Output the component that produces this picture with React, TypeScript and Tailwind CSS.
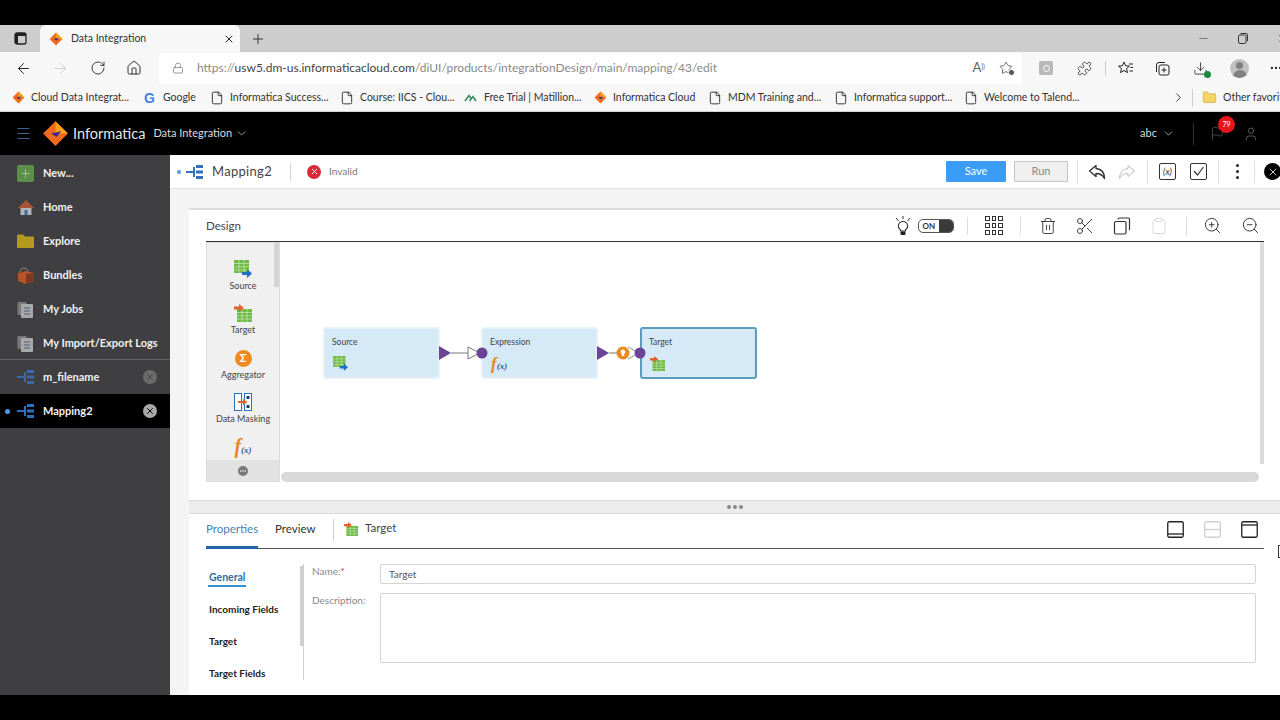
import {
  ArrowLeft,
  ArrowRight,
  ChevronDown,
  ChevronRight,
  Flag,
  Home,
  Lock,
  Menu,
  MoreHorizontal,
  Plus,
  RotateCw,
  Scissors,
  Trash2,
  User,
  X,
  ZoomIn,
  ZoomOut,
  Clipboard,
  Minus,
  Puzzle,
  Star,
  Download,
  File,
  Folder,
} from 'lucide-react';

const InfaLogo = ({ size = 14 }: { size?: number }) => (
  <svg width={size} height={size} viewBox="0 0 24 24" className="shrink-0">
    <path d="M12 1 L23 12 L12 23 L1 12 Z" fill="#f26b1d" />
    <path d="M12 1 L23 12 L12 12 Z" fill="#f9a01b" />
    <path d="M8 12 L17 10 L13 15 Z" fill="#3a2a8c" />
  </svg>
);

const MappingIcon = ({ color = '#2f6fc0', dash = '#2f6fc0' }: { color?: string; dash?: string }) => (
  <svg width="18" height="14" viewBox="0 0 18 14" className="shrink-0">
    <rect x="0" y="6" width="7" height="2" fill={dash} />
    <rect x="7" y="2" width="2" height="10" fill={color} />
    <rect x="10" y="0" width="7" height="3" fill={color} />
    <rect x="10" y="5.5" width="7" height="3" fill={color} />
    <rect x="10" y="11" width="7" height="3" fill={color} />
  </svg>
);

const SourceIcon = ({ size = 18 }: { size?: number }) => (
  <svg width={size} height={size} viewBox="0 0 18 18" className="shrink-0">
    <rect x="0" y="0" width="15" height="13" fill="#6dbb45" />
    <path d="M0 3.5H15M0 6.800H15M0 10H15M5 0V13M10 0V13" stroke="#d8efc8" strokeWidth="0.6" />
    <path d="M8 12H13V9L18 13.500L13 18V15H8Z" fill="#1f6fc4" />
  </svg>
);

const TargetIcon = ({ size = 18 }: { size?: number }) => (
  <svg width={size} height={size} viewBox="0 0 18 18" className="shrink-0">
    <rect x="3" y="5" width="15" height="13" fill="#6dbb45" />
    <path d="M3 8.500H18M3 11.800H18M3 15H18M8 5V18M13 5V18" stroke="#d8efc8" strokeWidth="0.6" />
    <path d="M0 2.500H5V0L10 4L5 8V5.500H0Z" fill="#e2622a" />
  </svg>
);

const FxIcon = ({ size = 'text-[18px]' }: { size?: string }) => (
  <span className={`font-['Liberation_Serif',serif] italic font-bold text-[#e8861f] leading-none ${size}`}>
    f<span className="text-[9px] text-[#3c5a8c]">(x)</span>
  </span>
);

const Bookmark = ({ width, icon, label }: { width: string; icon: React.ReactNode; label: string }) => (
  <div className={`flex items-center gap-[6px] shrink-0 ${width}`}>
    {icon}
    <span className="text-[10.500px] text-[#333] whitespace-nowrap">{label}</span>
  </div>
);

const PageIcon = () => <File size={14} strokeWidth={1.5} className="text-[#222] shrink-0" />;

const ChromeBars = () => (
  <>
    <div className="h-[25px] bg-black shrink-0" />
    {/* tab strip */}
    <div className="h-[27px] bg-[#cdcdcd] flex items-end shrink-0">
      <div className="w-[40px] h-full flex items-center justify-center">
        <svg width="13" height="13" viewBox="0 0 13 13">
          <rect x="1" y="1" width="11" height="11" rx="2" fill="none" stroke="#222" strokeWidth="1.3" />
          <rect x="1" y="1" width="11" height="3" fill="#222" />
          <rect x="1" y="1" width="3" height="11" fill="#222" />
        </svg>
      </div>
      <div className="w-[200px] h-[27px] bg-[#f7f7f7] rounded-t-[6px] flex items-center pl-[9px] pr-[5px]">
        <InfaLogo size={14} />
        <span className="ml-[8px] text-[10.500px] text-[#333] flex-1">Data Integration</span>
        <X size={12} className="text-[#222]" />
      </div>
      <div className="w-[36px] h-full flex items-center justify-center">
        <Plus size={16} strokeWidth={1.3} className="text-[#222]" />
      </div>
      <div className="flex-1" />
      <div className="h-full flex items-center -mr-[9px]">
        <Minus size={13} strokeWidth={1} className="text-[#333]" />
        <svg width="10" height="11" viewBox="0 0 10 11" className="ml-[28px]">
          <rect x=".5" y="2" width="7.500" height="8.500" rx="1.500" fill="none" stroke="#333" strokeWidth="1" />
          <path d="M2.500 .5H8A1.500 1.500 0 0 1 9.500 2V8" fill="none" stroke="#333" strokeWidth="1" />
        </svg>
        <X size={13} strokeWidth={1} className="ml-[28px] text-[#333]" />
      </div>
    </div>
    {/* address bar */}
    <div className="h-[32px] bg-[#f7f7f7] flex items-center shrink-0">
      <div className="w-[160px] flex items-center pl-[15px] gap-[20px]">
        <ArrowLeft size={17} strokeWidth={1.4} className="text-[#222]" />
        <ArrowRight size={17} strokeWidth={1.2} className="text-[#c8c8c8]" />
        <RotateCw size={16} strokeWidth={1.3} className="ml-[1px] text-[#222]" />
        <Home size={16} strokeWidth={1.4} className="text-[#222]" />
      </div>
      <div className="w-[863px] h-[31px] bg-white rounded-[3px] flex items-center pl-[13px] pr-[9px] -ml-[1px]">
        <Lock size={12} strokeWidth={1.3} className="text-[#666]" />
        <span className="ml-[13px] text-[12px] text-[#8a8a8a] flex-1 whitespace-nowrap">
          https://<span className="text-[#444]">usw5.dm-us.informaticacloud.com</span>/diUI/products/integrationDesign/main/mapping/43/edit
        </span>
        <span className="text-[13px] text-[#666] mr-[14px]">
          A<sup className="text-[7px]">))</sup>
        </span>
        <div className="relative">
          <Star size={14} strokeWidth={1.3} className="text-[#444]" />
          <span className="absolute -right-[2px] -bottom-[1px] w-[7px] h-[7px] rounded-full bg-[#555] border border-white" />
        </div>
      </div>
      <div className="flex items-center flex-1 overflow-hidden">
        <div className="ml-[17px] w-[14px] h-[14px] bg-[#b9b9b9] rounded-[2px] flex items-center justify-center shrink-0">
          <div className="w-[7px] h-[7px] rounded-full border border-white" />
        </div>
        <Puzzle size={15} strokeWidth={1.3} className="ml-[24px] text-[#222] shrink-0" />
        <div className="ml-[13px] w-px h-[15px] bg-[#ccc] shrink-0" />
        <svg width="16" height="15" viewBox="0 0 16 15" className="ml-[12px] shrink-0">
          <path
            d="M6 1L7.600 4.800L11.500 5.100L8.500 7.700L9.500 11.600L6 9.500L2.500 11.600L3.500 7.700L.5 5.100L4.400 4.800Z"
            fill="none"
            stroke="#222"
            strokeWidth="1"
          />
          <path d="M11 3H15M12.500 6.500H15M11.500 10H15" stroke="#222" strokeWidth="1" />
        </svg>
        <svg width="15" height="15" viewBox="0 0 15 15" className="ml-[21px] shrink-0">
          <path d="M1.500 11V4A2.500 2.500 0 0 1 4 1.500H10" fill="none" stroke="#222" strokeWidth="1" />
          <rect x="4" y="4" width="10" height="10" rx="2" fill="none" stroke="#222" strokeWidth="1" />
          <path d="M9 6.500V11.500M6.500 9H11.500" stroke="#222" strokeWidth="1" />
        </svg>
        <div className="relative ml-[23px] shrink-0">
          <Download size={15} strokeWidth={1.3} className="text-[#222]" />
          <span className="absolute -right-[3px] -bottom-[2px] w-[7px] h-[7px] rounded-full bg-[#1c8a3c]" />
        </div>
        <div className="w-[19px] h-[19px] rounded-full bg-[#c0c0c0] overflow-hidden flex flex-col items-center shrink-0 ml-[22px] pt-[3px]">
          <span className="w-[7px] h-[7px] rounded-full bg-[#808080]" />
          <span className="w-[14px] h-[8px] rounded-t-full bg-[#808080] mt-[1px]" />
        </div>
        <MoreHorizontal size={14} className="text-[#222] shrink-0 ml-[20px]" />
      </div>
    </div>
    {/* bookmarks */}
    <div className="h-[28px] bg-[#f7f7f7] border-b border-[#d4d4d4] flex items-center pl-[12px] shrink-0 overflow-hidden">
      <Bookmark width="w-[132px]" icon={<InfaLogo size={13} />} label="Cloud Data Integrat..." />
      <Bookmark
        width="w-[66px]"
        icon={
          <span className="font-['Liberation_Sans',sans-serif] font-bold text-[14px] leading-none text-[#3f7fe8] mr-[2px]">
            G
          </span>
        }
        label="Google"
      />
      <Bookmark width="w-[130px]" icon={<PageIcon />} label="Informatica Success..." />
      <Bookmark width="w-[124px]" icon={<PageIcon />} label="Course: IICS - Clou..." />
      <Bookmark
        width="w-[130px]"
        icon={
          <svg width="13" height="8" viewBox="0 0 13 8" className="shrink-0 mr-[1px]">
            <path d="M1 7L5 1.500L7.500 5M5.500 7L9 2.500L12 7" fill="none" stroke="#2e8b57" strokeWidth="1.500" />
          </svg>
        }
        label="Free Trial | Matillion..."
      />
      <Bookmark width="w-[114px]" icon={<InfaLogo size={13} />} label="Informatica Cloud" />
      <Bookmark width="w-[126px]" icon={<PageIcon />} label="MDM Training and..." />
      <Bookmark width="w-[130px]" icon={<PageIcon />} label="Informatica support..." />
      <Bookmark width="w-[207px]" icon={<PageIcon />} label="Welcome to Talend..." />
      <ChevronRight size={15} strokeWidth={1.4} className="text-[#222] shrink-0" />
      <div className="h-[18px] w-px bg-[#ccc] ml-[6px] shrink-0" />
      <div className="flex items-center gap-[6px] shrink-0 ml-[9px]">
        <Folder size={15} fill="#f6d365" strokeWidth={1} className="text-[#c9a227]" />
        <span className="text-[10.500px] text-[#333] whitespace-nowrap">Other favorites</span>
      </div>
    </div>
  </>
);

const AppHeader = () => (
  <div className="h-[43px] bg-black flex items-center shrink-0">
    <Menu size={17} strokeWidth={1.3} className="ml-[15px] text-[#3f6f9f]" />
    <div className="ml-[10px]">
      <InfaLogo size={27} />
    </div>
    <span className="ml-[4px] text-[14.500px] text-[#e6e6e6]">Informatica</span>
    <span className="ml-[8px] text-[11px] text-[#dcdcdc]">Data Integration</span>
    <ChevronDown size={13} strokeWidth={1.3} className="ml-[3px] text-[#dcdcdc]" />
    <div className="flex-1" />
    <span className="text-[11px] text-[#dcdcdc]">abc</span>
    <ChevronDown size={13} strokeWidth={1.3} className="ml-[5px] text-[#dcdcdc]" />
    <div className="w-px h-[22px] bg-[#333] ml-[18px]" />
    <div className="relative ml-[16px]">
      <Flag size={15} strokeWidth={1.2} className="text-[#555]" />
      <span className="absolute -top-[10px] left-[8px] w-[17px] h-[17px] rounded-full bg-[#e8141c] text-white text-[7px] flex items-center justify-center">
        79
      </span>
    </div>
    <User size={16} strokeWidth={1.1} className="ml-[18px] mr-[21px] text-[#777]" />
  </div>
);

const SideRow = ({
  icon,
  label,
  active,
  dot,
  close,
  low,
}: {
  icon: React.ReactNode;
  label: string;
  active?: boolean;
  dot?: boolean;
  close?: string;
  low?: boolean;
}) => (
  <div className={`relative h-[34px] flex items-center pl-[17px] ${active ? 'bg-black' : ''} ${low ? 'pt-[2px]' : ''}`}>
    {dot && <span className="absolute left-[5px] w-[5px] h-[5px] rounded-full bg-[#4a9be8]" />}
    <div className="w-[17px] flex justify-center shrink-0">{icon}</div>
    <span className="ml-[9px] text-[11px] font-bold text-[#f1f1f1] whitespace-nowrap flex-1">{label}</span>
    {close && (
      <span className={`w-[14px] h-[14px] mr-[13px] rounded-full flex items-center justify-center ${close}`}>
        <X size={10} strokeWidth={2.2} className={active ? 'text-black' : 'text-[#444]'} />
      </span>
    )}
  </div>
);

const DocsIcon = () => (
  <svg width="17" height="17" viewBox="0 0 17 17">
    <rect x="0.5" y="1" width="9" height="13" rx="1" fill="#7a7a7a" />
    <rect x="4" y="3" width="12" height="14" rx="1" fill="#a8a8a8" />
    <path d="M7 7H13M7 10H13M7 13H13" stroke="#4d5f78" strokeWidth="1.2" />
  </svg>
);

const Sidebar = () => (
  <div className="w-[170px] bg-[#3f3f41] shrink-0 flex flex-col">
    <SideRow
      low
      icon={
        <span className="w-[17px] h-[17px] rounded-[2px] bg-[#5d8f4a] flex items-center justify-center">
          <Plus size={13} strokeWidth={1.3} className="text-[#b8d6ab]" />
        </span>
      }
      label="New..."
    />
    <SideRow
      low
      icon={
        <svg width="16" height="15" viewBox="0 0 16 15">
          <path d="M2.5 7V15H13.5V7Z" fill="#b3b3b3" />
          <path d="M0 8L8 0L16 8Z" fill="#a9543a" />
          <rect x="6.5" y="10" width="3" height="5" fill="#3b6aa8" />
        </svg>
      }
      label="Home"
    />
    <SideRow
      low
      icon={
        <svg width="17" height="14" viewBox="0 0 17 14">
          <path d="M0 2C0 1 .5.5 1.5.5H6L8 2.5H15.5C16.5 2.500 17 3 17 4V13C17 13.500 16.500 14 16 14H1C.5 14 0 13.500 0 13Z" fill="#b59a22" />
        </svg>
      }
      label="Explore"
    />
    <SideRow
      low
      icon={
        <svg width="17" height="17" viewBox="0 0 17 17">
          <path d="M3 5C3 0 10 0 11 4" fill="none" stroke="#8a8a8a" strokeWidth="1" />
          <path d="M1 6L9 4L17 6V14L9 17L1 14Z" fill="#b5552a" />
          <path d="M9 7L17 6V14L9 17Z" fill="#7c3b20" />
        </svg>
      }
      label="Bundles"
    />
    <SideRow low icon={<DocsIcon />} label="My Jobs" />
    <SideRow low icon={<DocsIcon />} label="My Import/Export Logs" />
    <div className="h-px bg-[#66666a]" />
    <SideRow icon={<MappingIcon color="#3a6aa8" dash="#3a6aa8" />} label="m_filename" close="bg-[#6b6b6b]" />
    <SideRow icon={<MappingIcon />} label="Mapping2" active dot close="bg-[#a8a8a8]" />
  </div>
);

const ReplyIcon = ({ className, flip, width }: { className: string; flip?: boolean; width: number }) => (
  <svg width="18" height="16" viewBox="0 0 18 16" className={className}>
    <path
      d="M8 1.500L1.500 7L8 12.500V9.500C11.500 9.500 14.500 10.500 16.500 14.500C16.500 8.500 13 5 8 4.500Z"
      fill="none"
      stroke="currentColor"
      strokeWidth={width}
      strokeLinejoin="round"
      transform={flip ? 'matrix(-1 0 0 1 18 0)' : undefined}
    />
  </svg>
);

const MappingBar = () => (
  <div className="h-[34px] bg-white border-b border-[#e3e3e3] flex items-center shrink-0">
    <span className="ml-[7px] w-[4px] h-[4px] rounded-full bg-[#4a9be8]" />
    <div className="ml-[5px]">
      <MappingIcon />
    </div>
    <span className="ml-[8px] text-[13px] text-[#444] tracking-[0.3px] w-[61px] whitespace-nowrap">Mapping2</span>
    <div className="w-px h-[18px] bg-[#d6d6d6] ml-[17px]" />
    <span className="ml-[16px] w-[14px] h-[14px] rounded-full bg-[#d92b3a] flex items-center justify-center">
      <X size={9} strokeWidth={2.5} className="text-white" />
    </span>
    <span className="ml-[8px] text-[10px] text-[#777]">Invalid</span>
    <div className="flex-1" />
    <button className="w-[60px] h-[21px] bg-[#3b9cf5] text-white text-[11px] rounded-[1px]">Save</button>
    <button className="ml-[8px] w-[54px] h-[21px] bg-[#efefef] border border-[#c4c4c4] text-[#8a8a8a] text-[11px] rounded-[1px]">
      Run
    </button>
    <div className="w-px h-[22px] bg-[#dedede] ml-[9px]" />
    <ReplyIcon width={1.4} className="ml-[10px] text-[#333]" />
    <ReplyIcon width={1} flip className="ml-[12px] text-[#bdbdbd]" />
    <div className="w-px h-[22px] bg-[#dedede] ml-[11px]" />
    <span className="ml-[11px] w-[17px] h-[17px] border border-[#333] rounded-[2px] flex items-center justify-center italic text-[9px] text-[#333]">
      (x)
    </span>
    <span className="ml-[14px] w-[17px] h-[17px] border border-[#333] rounded-[2px] flex items-center justify-center">
      <svg width="13" height="11" viewBox="0 0 13 11">
        <path d="M2 5L5.500 9L11.500 1" fill="none" stroke="#333" strokeWidth="1.2" />
      </svg>
    </span>
    <div className="w-px h-[22px] bg-[#dedede] ml-[11px]" />
    <span className="ml-[17px] flex flex-col gap-[3px]">
      <span className="w-[3px] h-[3px] rounded-full bg-[#222]" />
      <span className="w-[3px] h-[3px] rounded-full bg-[#222]" />
      <span className="w-[3px] h-[3px] rounded-full bg-[#222]" />
    </span>
    <div className="w-px h-[22px] bg-[#dedede] ml-[15px]" />
    <span className="ml-[9px] -mr-[1px] w-[17px] h-[17px] rounded-full bg-black flex items-center justify-center shrink-0">
      <X size={12} strokeWidth={1.6} className="text-white" />
    </span>
  </div>
);

const PaletteItem = ({ icon, label }: { icon: React.ReactNode; label: string }) => (
  <div className="h-[44.600px] flex flex-col items-center justify-end">
    {icon}
    <span className="mt-[2px] text-[9px] leading-[12px] text-[#444] whitespace-nowrap">{label}</span>
  </div>
);

const Palette = () => (
  <div className="relative w-[74px] h-[240px] bg-[#f0f0f0] border border-[#dcdcdc] shrink-0 overflow-hidden">
    <div className="pt-[4px] flex flex-col">
      <PaletteItem icon={<SourceIcon />} label="Source" />
      <PaletteItem icon={<TargetIcon />} label="Target" />
      <PaletteItem
        icon={
          <span className="w-[17px] h-[17px] rounded-full bg-[#ee8a1f] text-white text-[11px] font-bold flex items-center justify-center">
            Σ
          </span>
        }
        label="Aggregator"
      />
      <PaletteItem
        icon={
          <svg width="18" height="18" viewBox="0 0 18 18">
            <rect x=".5" y=".5" width="7" height="17" fill="#fff" stroke="#2f6fc0" />
            <rect x="10.500" y=".5" width="7" height="17" fill="#fff" stroke="#2f6fc0" />
            <rect x="12.500" y="3" width="3" height="3" fill="#1f3f70" />
            <rect x="12.500" y="12" width="3" height="3" fill="#1f3f70" />
            <path d="M4 8H9V6L13.500 9L9 12V10H4Z" fill="#e2622a" />
          </svg>
        }
        label="Data Masking"
      />
      <PaletteItem icon={<FxIcon size="text-[20px]" />} label="Expression" />
    </div>
    <div className="absolute right-0 top-0 w-[5px] h-[44px] bg-[#d4d4d4]" />
    <div className="absolute left-0 right-0 bottom-0 h-[21px] bg-[#e2e2e2] flex items-center justify-center">
      <span className="w-[10px] h-[10px] rounded-full bg-[#777] flex items-center justify-center">
        <MoreHorizontal size={8} className="text-white" />
      </span>
    </div>
  </div>
);

// nodes of the diagram sit on a free canvas, positions relative to the canvas
const Node = ({
  left,
  label,
  icon,
  selected,
}: {
  left: string;
  label: string;
  icon: React.ReactNode;
  selected?: boolean;
}) => (
  <div
    className={`absolute top-[85px] ${left} w-[117px] h-[52px] rounded-[3px] bg-[#d5e9f6] border-2 ${
      selected ? 'border-[#5b9bbb]' : 'border-[#e6f1f8]'
    } px-[7px] pt-[7px]`}
  >
    <div className="text-[8.500px] leading-[12px] text-[#444]">{label}</div>
    <div className="mt-[7px] ml-[1px] h-[16px] flex items-center">{icon}</div>
  </div>
);

const Canvas = () => (
  <div className="relative flex-1 h-[240px] overflow-hidden">
    <Node left="left-[43px]" label="Source" icon={<SourceIcon size={15} />} />
    <Node left="left-[201px]" label="Expression" icon={<FxIcon size="text-[17px]" />} />
    <Node left="left-[360px]" label="Target" icon={<TargetIcon size={15} />} selected />
    <svg width="340" height="30" viewBox="0 0 340 30" className="absolute left-[150px] top-[100px]">
      <path d="M9 4L21 11L9 18Z" fill="#6a4397" />
      <path d="M21 11H38" stroke="#777" strokeWidth="1" />
      <path d="M38 5L50 11L38 17Z" fill="#fff" stroke="#777" strokeWidth="1" />
      <circle cx="52" cy="11" r="5.500" fill="#6a4397" />
      <path d="M167 4L179 11L167 18Z" fill="#6a4397" />
      <path d="M179 11H188" stroke="#777" strokeWidth="1" />
      <path d="M198 5L209 11L198 17" fill="none" stroke="#999" strokeWidth="1" />
      <circle cx="193" cy="11" r="6.500" fill="#ee8a1f" />
      <path d="M193 7.500a2.300 2.300 0 0 1 1.200 4.300V14h-2.400v-2.200A2.300 2.300 0 0 1 193 7.500Z" fill="#fff" />
      <circle cx="210" cy="11" r="5.500" fill="#6a4397" />
    </svg>
    <div className="absolute left-[1px] right-[5px] bottom-0 h-[10px] rounded-full bg-[#d9d9d9]" />
    <div className="absolute right-0 top-0 w-[4px] h-[222px] bg-[#dcdcdc]" />
  </div>
);

const ToolDivider = () => <div className="w-px h-[18px] bg-[#dcdcdc] shrink-0" />;

const DesignPanel = () => (
  <div className="mt-[19px] ml-[19px] h-[292px] bg-white border-t-[2px] border-[#dddddd] shrink-0 pl-[17px] pr-[16px]">
    <div className="h-[32px] border-b border-[#333] flex items-center">
      <span className="pt-[1px] text-[11.500px] text-[#444]">Design</span>
      <div className="flex-1" />
      <svg width="18" height="20" viewBox="0 0 18 20" className="shrink-0">
        <path d="M9 0V3M2 2L4.500 5M16 2L13.500 5" stroke="#333" strokeWidth="1" />
        <path d="M9 5.500A4.500 4.500 0 0 0 6.500 13.800V15H11.500V13.800A4.500 4.500 0 0 0 9 5.500Z" fill="#fff" stroke="#333" strokeWidth="1.100" />
        <rect x="6.500" y="15.500" width="5" height="3.500" rx="1" fill="#222" />
      </svg>
      <div className="ml-[6px] w-[36px] h-[14px] rounded-[5px] border border-[#555] flex items-center overflow-hidden">
        <span className="w-[20px] text-center text-[8px] font-bold text-[#333]">ON</span>
        <span className="flex-1 h-full bg-[#3a3a3a]" />
      </div>
      <div className="ml-[13px]">
        <ToolDivider />
      </div>
      <div className="ml-[17px] grid grid-cols-3 gap-[2px]">
        {Array.from({ length: 9 }).map((_, i) => (
          <span key={i} className="w-[4.700px] h-[4.700px] border border-[#333]" />
        ))}
      </div>
      <div className="ml-[17px]">
        <ToolDivider />
      </div>
      <Trash2 size={18} strokeWidth={1.2} className="ml-[18px] text-[#333]" />
      <Scissors size={20} strokeWidth={1.1} className="ml-[18px] text-[#333]" />
      <svg width="18" height="18" viewBox="0 0 18 18" className="ml-[18px] shrink-0">
        <rect x="1.500" y="4.500" width="11.500" height="12.500" rx="1.500" fill="none" stroke="#333" strokeWidth="1.200" />
        <path d="M5 2.500A1.500 1.500 0 0 1 6.500 1H15.500A1.500 1.500 0 0 1 16.500 2.500V13" fill="none" stroke="#333" strokeWidth="1.200" />
      </svg>
      <Clipboard size={18} strokeWidth={1} className="ml-[19px] text-[#cfcfcf]" />
      <div className="ml-[18px]">
        <ToolDivider />
      </div>
      <ZoomIn size={19} strokeWidth={1.2} className="ml-[16px] text-[#333]" />
      <ZoomOut size={19} strokeWidth={1.2} className="ml-[19px] mr-[4px] text-[#333]" />
    </div>
    <div className="flex">
      <Palette />
      <Canvas />
    </div>
  </div>
);

const LayoutIcon = ({ kind }: { kind: 'bottom' | 'mid' | 'top' }) => (
  <svg width="17" height="17" viewBox="0 0 17 17">
    <rect
      x=".75"
      y=".75"
      width="15.500"
      height="15.500"
      rx="1.500"
      fill="none"
      stroke={kind === 'mid' ? '#cfcfcf' : '#222'}
      strokeWidth="1.300"
    />
    {kind === 'bottom' && <path d="M1 13H16" stroke="#222" strokeWidth="1.300" />}
    {kind === 'mid' && <path d="M1 8.500H16" stroke="#cfcfcf" strokeWidth="1.300" />}
    {kind === 'top' && <path d="M1 4H16" stroke="#222" strokeWidth="1.300" />}
  </svg>
);

const SubNav = ({ label, active }: { label: string; active?: boolean }) => (
  <div className="h-[32px] flex items-start">
    <span
      className={`font-bold leading-[14px] pb-[1px] ${
        active ? 'text-[10.500px] text-[#2f6fa8] border-b-2 border-[#2f8fd0] px-[1px] -ml-[1px]' : 'text-[10px] text-[#222]'
      }`}
    >
      {label}
    </span>
  </div>
);

const PropertiesPanel = () => (
  <div className="ml-[19px] flex-1 bg-white pl-[17px] pr-[16px] min-h-0">
    <div className="h-[35px] border-b border-[#555] flex items-stretch">
      <div className="w-[52px] border-b-[3px] border-[#2563ad] -mb-[1px] pt-[6px] text-[11.500px] leading-[18px] text-[#4a82b5]">
        Properties
      </div>
      <div className="ml-[17px] w-[41px] pt-[6px] text-[11.500px] leading-[18px] text-[#333]">Preview</div>
      <div className="ml-[17px] mt-[5px] w-px h-[22px] bg-[#ccc]" />
      <div className="ml-[10px] pt-[6px] h-[28px] flex items-start gap-[7px]">
        <span className="mt-[2px]">
          <TargetIcon size={14} />
        </span>
        <span className="text-[11.500px] leading-[15px] text-[#444]">Target</span>
      </div>
      <div className="flex-1" />
      <div className="flex items-center gap-[20px] pb-[3px] pr-[6px]">
        <LayoutIcon kind="bottom" />
        <LayoutIcon kind="mid" />
        <LayoutIcon kind="top" />
      </div>
    </div>
    <div className="flex pt-[15px]">
      <div className="w-[98px] relative shrink-0 h-[116px] border-r border-[#cfcfcf] mr-[8px] pl-[3px] pt-[6px]">
        <SubNav label="General" active />
        <SubNav label="Incoming Fields" />
        <SubNav label="Target" />
        <SubNav label="Target Fields" />
        <div className="absolute -right-[1px] top-[2px] w-[4px] h-[80px] bg-[#cfcfcf]" />
      </div>
      <div className="w-[68px] shrink-0 text-[10px] text-[#8a8a8a]">
        <div className="leading-[14px]">
          Name:<span className="text-[#d92b3a]">*</span>
        </div>
        <div className="mt-[15px] leading-[14px]">Description:</div>
      </div>
      <div className="flex-1 pr-[8px]">
        <div className="h-[20px] border border-[#d4d4d4] rounded-[2px] flex items-center pl-[8px] text-[10px] text-[#555]">
          Target
        </div>
        <div className="mt-[9px] h-[70px] border border-[#d4d4d4] rounded-[2px]" />
      </div>
    </div>
  </div>
);

const App = () => (
  <div className="relative w-[1280px] h-[720px] overflow-hidden flex flex-col bg-black font-['Lato','Liberation_Sans',sans-serif]">
    <ChromeBars />
    <AppHeader />
    <div className="h-[540px] flex shrink-0">
      <Sidebar />
      <div className="flex-1 min-w-0 flex flex-col bg-[#f4f4f4]">
        <MappingBar />
        <DesignPanel />
        <div className="h-[14px] ml-[19px] bg-[#ececec] border-y border-[#d9d9d9] flex items-center justify-center gap-[2px] shrink-0">
          <span className="w-[4px] h-[4px] rounded-full bg-[#888]" />
          <span className="w-[4px] h-[4px] rounded-full bg-[#888]" />
          <span className="w-[4px] h-[4px] rounded-full bg-[#888]" />
        </div>
        <PropertiesPanel />
      </div>
    </div>
    <div className="flex-1 bg-black" />
    {/* bit of the mouse cursor at the right edge */}
    <div className="absolute left-[1278px] top-[545px] w-[6px] h-[13px] border border-[#333] bg-white" />
  </div>
);

export default App;
